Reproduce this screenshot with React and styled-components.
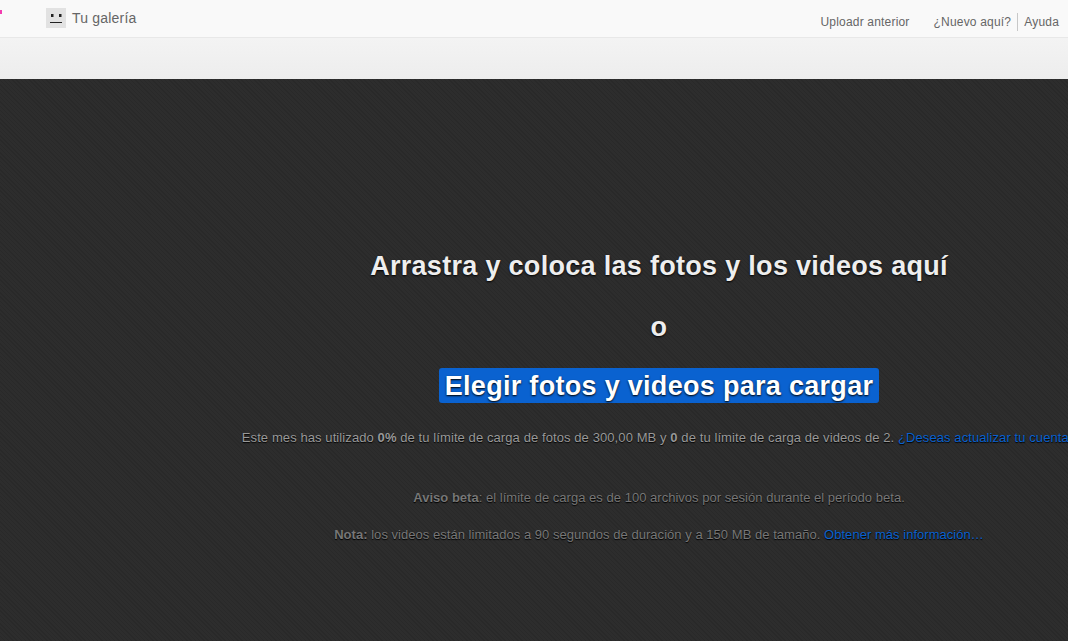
import React from "react";
import styled, { createGlobalStyle } from "styled-components";

const Global = createGlobalStyle`
  html, body { margin: 0; padding: 0; height: 100%; overflow: hidden; }
  body { font-family: "Liberation Sans", Arial, sans-serif; }
  #root { height: 100%; }
  a { text-decoration: none; }
`;

const Page = styled.div`
  display: flex;
  flex-direction: column;
  width: 1068px;
  height: 641px;
  overflow: hidden;
  position: relative;
`;

const TopBar = styled.header`
  flex: none;
  height: 37px;
  display: flex;
  align-items: center;
  justify-content: space-between;
  padding: 0 9px 0 46px;
  background: #f9f9f9;
  border-bottom: 1px solid #e8e8e8;
`;

const Speck = styled.span`
  position: absolute;
  left: 0;
  top: 10px;
  width: 2px;
  height: 4px;
  background: #f23db0;
`;

const Gallery = styled.a`
  display: flex;
  align-items: center;
  gap: 6px;
  font-size: 14px;
  letter-spacing: 0.2px;
  color: #666;
  margin-top: -1px;
`;

const Avatar = styled.svg`
  display: block;
  width: 20px;
  height: 20px;
`;

const Nav = styled.nav`
  display: flex;
  align-items: center;
  margin-top: 6px;
  font-size: 12px;
  letter-spacing: 0.19px;
  color: #666;
`;

const NavLink = styled.a`
  color: #666;
  padding: ${(p) => p.$pad || "0"};
  border-left: ${(p) => (p.$divided ? "1px solid #c8c8c8" : "none")};
  line-height: 18px;
`;

const SubBar = styled.div`
  flex: none;
  height: 41px;
  background: linear-gradient(#f3f3f3, #ededed);
`;

const DropZone = styled.main`
  flex: 1;
  min-height: 0;
  display: flex;
  flex-direction: column;
  align-items: center;
  padding: 171px 0 0 250px;
  background-color: #2d2d2d;
  background-image: repeating-linear-gradient(
    45deg,
    rgba(0, 0, 0, 0.09) 0,
    rgba(0, 0, 0, 0.09) 1px,
    transparent 1px,
    transparent 3px
  );
`;

const Headline = styled.div`
  font-size: 27px;
  letter-spacing: 0.3px;
  line-height: 32px;
  font-weight: bold;
  color: #eeeeee;
  text-shadow: 0 1px 2px #000;
  white-space: nowrap;
  margin-bottom: ${(p) => p.$after}px;
`;

const ChooseButton = styled.a`
  display: block;
  padding: 3px 6px 1px;
  line-height: 31px;
  font-size: 27px;
  letter-spacing: 0.3px;
  font-weight: bold;
  color: #fff;
  background: #0a62d0;
  border-radius: 3px;
  text-shadow: 0 1px 2px #000;
  white-space: nowrap;
  margin-bottom: 26px;
`;

const Note = styled.p`
  margin: 0 0 ${(p) => p.$after}px;
  font-size: 13px;
  letter-spacing: ${(p) => p.$track}px;
  line-height: 18px;
  color: ${(p) => p.$color};
  text-shadow: 0 1px 1px #000;
  white-space: nowrap;
  flex: none;
`;

const Inline = styled.a`
  color: #0a62d0;
`;

export default function App() {
  return (
    <Page>
      <Global />
      <Speck />
      <TopBar>
        <Gallery href="#">
          <Avatar viewBox="0 0 20 20" aria-hidden="true">
            <rect width="20" height="20" fill="#e2e2e2" />
            <rect x="5" y="6" width="2.5" height="3" fill="#222" />
            <rect x="13" y="6" width="2.5" height="3" fill="#222" />
            <rect x="4" y="14" width="12" height="1" fill="#222" />
          </Avatar>
          Tu galería
        </Gallery>
        <Nav>
          <NavLink href="#" $pad="0 24px 0 0">Uploadr anterior</NavLink>
          <NavLink href="#" $pad="0 6px 0 0">¿Nuevo aquí?</NavLink>
          <NavLink href="#" $divided $pad="0 0 0 6px">Ayuda</NavLink>
        </Nav>
      </TopBar>
      <SubBar />
      <DropZone>
        <Headline $after={29}>Arrastra y coloca las fotos y los videos aquí</Headline>
        <Headline $after={25}>o</Headline>
        <ChooseButton href="#">Elegir fotos y videos para cargar</ChooseButton>
        <Note $color="#999" $track={0.09} $after={42}>
          Este mes has utilizado <b>0%</b> de tu límite de carga de fotos de 300,00 MB y <b>0</b> de tu límite de carga de videos de 2.{" "}
          <Inline href="#">¿Deseas actualizar tu cuenta?</Inline>
        </Note>
        <Note $color="#777" $track={0.025} $after={19}>
          <b>Aviso beta</b>: el límite de carga es de 100 archivos por sesión durante el período beta.
        </Note>
        <Note $color="#777" $track={0.035} $after={0}>
          <b>Nota:</b> los videos están limitados a 90 segundos de duración y a 150 MB de tamaño.{" "}
          <Inline href="#">Obtener más información…</Inline>
        </Note>
      </DropZone>
    </Page>
  );
}
